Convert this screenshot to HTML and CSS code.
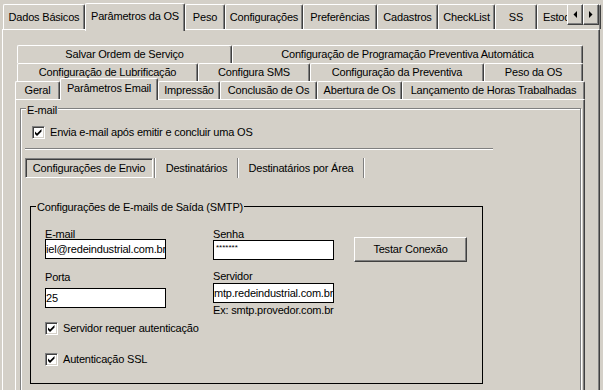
FILE: index.html
```html
<!DOCTYPE html>
<html lang="pt-BR">
<head>
<meta charset="utf-8">
<title>Parâmetros da OS</title>
<link rel="stylesheet" href="styles.css">
</head>
<body>
<div class="window">
  <div class="top-tabs">
    <div class="ttab t-dados">Dados Básicos</div>
    <div class="ttab ttab-sel t-param">Parâmetros da OS</div>
    <div class="ttab t-peso">Peso</div>
    <div class="ttab t-config">Configurações</div>
    <div class="ttab t-pref">Preferências</div>
    <div class="ttab t-cad">Cadastros</div>
    <div class="ttab t-check">CheckList</div>
    <div class="ttab t-ss">SS</div>
    <div class="ttab t-estoque">Estoque</div>
    <div class="scroller">
      <div class="sbtn"><svg width="4" height="7" viewBox="0 0 4 7"><polygon points="4,0 4,7 0.5,3.5" fill="#000"/></svg></div>
      <div class="sbtn"><svg width="4" height="7" viewBox="0 0 4 7"><polygon points="0,0 0,7 3.5,3.5" fill="#000"/></svg></div>
    </div>
  </div>

  <div class="panel">
    <div class="subtabs">
      <div class="row row-back">
        <div class="stab w-salvar">Salvar Ordem de Serviço</div>
        <div class="stab w-progprev">Configuração de Programação Preventiva Automática</div>
      </div>
      <div class="row row-back">
        <div class="stab w-lub">Configuração de Lubrificação</div>
        <div class="stab w-sms">Configura SMS</div>
        <div class="stab w-prev">Configuração da Preventiva</div>
        <div class="stab w-pesoos">Peso da OS</div>
      </div>
      <div class="row row-front">
        <div class="stab w-geral">Geral</div>
        <div class="stab stab-sel w-email">Parâmetros Email</div>
        <div class="stab w-impr">Impressão</div>
        <div class="stab w-concl">Conclusão de Os</div>
        <div class="stab w-abert">Abertura de Os</div>
        <div class="stab w-lanc">Lançamento de Horas Trabalhadas</div>
      </div>
    </div>

    <div class="page">
      <div class="group">
        <span class="group-label">E-mail</span>
        <div class="check check-top">
          <span class="cbox"><svg width="11" height="11" viewBox="0 0 11 11"><path d="M2 4.5 L4 6.5 L8.5 2 V4.5 L4 9 L2 7 Z" fill="#000"/></svg></span>
          <span>Envia e-mail após emitir e concluir uma OS</span>
        </div>
        <div class="hsep"></div>
        <div class="flat-tabs">
          <div class="ftab ftab-sel">Configurações de Envio</div>
          <div class="vsep"></div>
          <div class="ftab ftab-dest">Destinatários</div>
          <div class="vsep"></div>
          <div class="ftab ftab-area">Destinatários por Área</div>
          <div class="vsep"></div>
        </div>

        <div class="smtp">
          <span class="smtp-label">Configurações de E-mails de Saída (SMTP)</span>
          <div class="smtp-cols">
            <div class="col col-1">
              <span class="field-label">E-mail</span>
              <input class="inp" type="text" value="iel@redeindustrial.com.br" readonly>
              <span class="field-label lbl-porta">Porta</span>
              <input class="inp inp-porta" type="text" value="25" readonly>
              <div class="check check-auth">
                <span class="cbox"><svg width="11" height="11" viewBox="0 0 11 11"><path d="M2 4.5 L4 6.5 L8.5 2 V4.5 L4 9 L2 7 Z" fill="#000"/></svg></span>
                <span>Servidor requer autenticação</span>
              </div>
              <div class="check check-ssl">
                <span class="cbox"><svg width="11" height="11" viewBox="0 0 11 11"><path d="M2 4.5 L4 6.5 L8.5 2 V4.5 L4 9 L2 7 Z" fill="#000"/></svg></span>
                <span>Autenticação SSL</span>
              </div>
            </div>
            <div class="col col-2">
              <span class="field-label">Senha</span>
              <input class="inp inp-senha" type="text" value="*******" readonly>
              <span class="field-label lbl-servidor">Servidor</span>
              <input class="inp inp-servidor" type="text" value="mtp.redeindustrial.com.br" readonly>
              <span class="field-label lbl-ex">Ex: smtp.provedor.com.br</span>
            </div>
            <div class="col col-3">
              <button class="btn" type="button">Testar Conexão</button>
            </div>
          </div>
        </div>
      </div>
    </div>
  </div>
</div>
</body>
</html>
```
FILE: styles.css
```css
html, body {
  margin: 0;
  background: #d4d0c8;
}

body {
  width: 603px;
  height: 390px;
  overflow: hidden;
  font: 11px/13px "Liberation Sans", Arial, sans-serif;
  letter-spacing: -0.2px;
  color: #000;
}

/* ---------- outer tab strip ---------- */
.top-tabs {
  position: relative;
  display: flex;
  align-items: flex-end;
  height: 29px;
  padding-left: 3px;
}

.ttab {
  box-sizing: border-box;
  height: 25px;
  border-top: 1px solid #fff;
  border-left: 1px solid #fff;
  border-right: 1px solid #404040;
  box-shadow: inset -1px 0 #808080;
  border-radius: 2px 2px 0 0;
  display: flex;
  align-items: center;
  justify-content: center;
  white-space: nowrap;
  overflow: hidden;
  flex-shrink: 0;
}

.ttab-sel {
  position: relative;
  z-index: 1;
  height: 28px;
  margin-bottom: -2px;
  padding-bottom: 2px;
  background: #d4d0c8;
}

.t-dados { width: 82px; }
.t-param { width: 100px; }
.t-peso { width: 40px; }
.t-config { width: 78px; }
.t-pref { width: 74px; }
.t-cad { width: 61px; }
.t-check { width: 57px; }
.t-ss { width: 42px; }
.t-estoque { width: 64px; justify-content: flex-start; padding-left: 5px; }

.scroller {
  position: absolute;
  left: 567px;
  top: 4px;
  display: flex;
  z-index: 2;
}

.sbtn {
  box-sizing: border-box;
  width: 16px;
  height: 21px;
  border: 1px solid;
  border-color: #fff #404040 #404040 #fff;
  box-shadow: inset -1px -1px #808080;
  background: #d4d0c8;
  display: flex;
  align-items: center;
  justify-content: center;
}

/* ---------- outer panel ---------- */
.panel {
  box-sizing: border-box;
  margin-left: 2px;
  width: 598px;
  height: 362px;
  border-top: 1px solid #fff;
  border-left: 1px solid #fff;
  border-right: 1px solid #404040;
  box-shadow: inset -1px 0 #808080;
  padding: 15px 0 0 12px;
}

/* ---------- inner multi-row tabs ---------- */
.subtabs {
  width: 570px;
}

.row {
  display: flex;
  height: 18px;
}

.row-back {
  margin-left: 2px;
}

.row-front {
  align-items: flex-start;
}

.stab {
  box-sizing: border-box;
  height: 18px;
  border-top: 1px solid #fff;
  border-left: 1px solid #fff;
  border-right: 1px solid #404040;
  box-shadow: inset -1px 0 #808080;
  border-radius: 2px 2px 0 0;
  display: flex;
  align-items: center;
  justify-content: center;
  white-space: nowrap;
  overflow: hidden;
  flex-shrink: 0;
}

.stab-sel {
  position: relative;
  z-index: 1;
  height: 22px;
  margin-top: -3px;
  margin-bottom: -1px;
  padding-bottom: 3px;
  background: #d4d0c8;
}

.w-salvar { width: 215px; }
.w-progprev { width: 351px; }
.w-lub { width: 181px; }
.w-sms { width: 112px; }
.w-prev { width: 174px; }
.w-pesoos { width: 99px; }
.w-geral { width: 45px; }
.w-email { width: 98px; }
.w-impr { width: 62px; }
.w-concl { width: 97px; }
.w-abert { width: 85px; }
.w-lanc { width: 183px; }

/* ---------- page ---------- */
.page {
  box-sizing: border-box;
  width: 570px;
  height: 300px;
  border-top: 1px solid #fff;
  border-left: 1px solid #fff;
  border-right: 1px solid #404040;
  box-shadow: inset -1px 0 #808080;
  padding: 8px 0 0 4px;
}

.group {
  position: relative;
  box-sizing: border-box;
  width: 561px;
  height: 300px;
  border: 1px solid #808080;
  box-shadow: inset 1px 1px #fff, 1px 1px #fff;
  padding-top: 17px;
}

.group-label {
  position: absolute;
  top: -5px;
  left: 5px;
  padding: 0 1px;
  background: #d4d0c8;
}

.check {
  display: flex;
  align-items: center;
  gap: 5px;
  height: 13px;
  white-space: nowrap;
}

.check-top {
  margin-left: 11px;
}

.cbox {
  box-sizing: border-box;
  flex-shrink: 0;
  width: 13px;
  height: 13px;
  border: 1px solid;
  border-color: #808080 #fff #fff #808080;
  box-shadow: inset 1px 1px #404040, inset -1px -1px #d4d0c8;
  background: #fff;
  display: flex;
}

.hsep {
  margin: 9px 0 0 4px;
  width: 468px;
  height: 0;
  border-top: 1px solid #808080;
  border-bottom: 1px solid #fff;
}

.flat-tabs {
  display: flex;
  margin: 8px 0 0 4px;
  height: 20px;
}

.ftab {
  box-sizing: border-box;
  height: 20px;
  display: flex;
  align-items: center;
  justify-content: center;
  white-space: nowrap;
}

.ftab-sel {
  width: 128px;
  margin-right: 1px;
  border: 1px solid;
  border-color: #808080 #fff #fff #808080;
  box-shadow: inset 1px 1px #404040;
}

.ftab-dest { width: 81px; }
.ftab-area { width: 124px; }

.vsep {
  width: 0;
  height: 20px;
  border-left: 1px solid #808080;
  border-right: 1px solid #fff;
}

/* ---------- SMTP group ---------- */
.smtp {
  position: relative;
  box-sizing: border-box;
  margin: 28px 0 0 9px;
  width: 453px;
  height: 178px;
  border: 1px solid #000;
}

.smtp-label {
  position: absolute;
  top: -6px;
  left: 5px;
  padding: 0 1px;
  background: #d4d0c8;
  white-space: nowrap;
}

.smtp-cols {
  display: flex;
  padding-left: 14px;
}

.col-1 { width: 168px; padding-top: 21px; }
.col-2 { width: 141px; padding-top: 21px; }
.col-3 { padding-top: 30px; }

.field-label {
  display: block;
  height: 11px;
  line-height: 13px;
  white-space: nowrap;
}

.inp {
  display: block;
  box-sizing: border-box;
  width: 121px;
  height: 20px;
  margin: 0;
  padding: 0;
  border: 1px solid #000;
  background: #fff;
  font: inherit;
  letter-spacing: inherit;
  color: #000;
  outline: none;
}

.lbl-porta { margin-top: 12px; }
.inp-porta { margin-top: 6px; }
.check-auth { margin-top: 14px; }
.check-ssl { margin-top: 18px; }

.inp-senha {
  margin-top: 1px;
  font-size: 8px;
  padding-bottom: 5px;
  padding-left: 2px;
  letter-spacing: 0;
}
.lbl-servidor { margin-top: 10px; }
.inp-servidor { margin-top: 2px; }
.lbl-ex { margin-top: 1px; height: 13px; }

.btn {
  box-sizing: border-box;
  width: 113px;
  height: 25px;
  margin: 0;
  padding: 0;
  border: 1px solid;
  border-color: #fff #404040 #404040 #fff;
  box-shadow: inset -1px -1px #808080;
  background: #d4d0c8;
  font: inherit;
  letter-spacing: inherit;
  color: #000;
}
```
